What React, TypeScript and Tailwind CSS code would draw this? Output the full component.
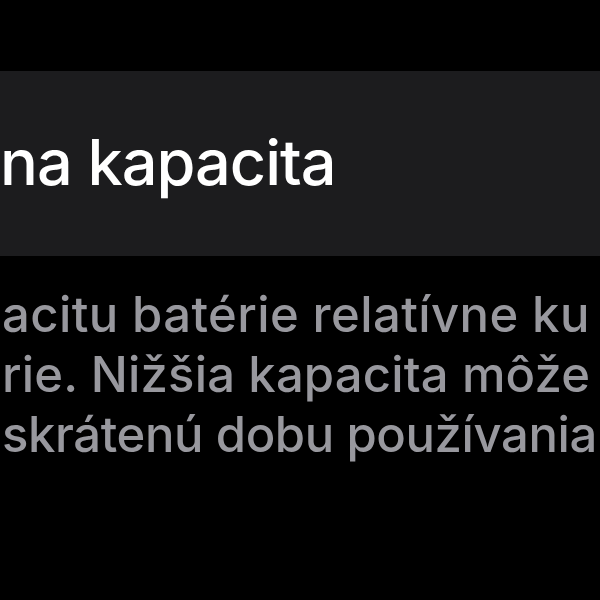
export default function App() {
  const font = { fontFamily: "Inter, 'Noto Sans', sans-serif" };
  return (
    <div className="w-[600px] h-[600px] bg-black overflow-hidden pt-[71px]" style={font}>
      <div className="h-[185px] bg-[#1c1c1e] pt-[60px]">
        <div className="whitespace-nowrap text-[63px] leading-[63px] font-medium text-white tracking-[-1px]">
          na kapacita
        </div>
      </div>
      <div className="pt-[29px] pl-[2px] flex flex-col text-[49px] leading-[60px] font-medium text-[#98989e] whitespace-nowrap">
        <div className="tracking-[0.4px]">acitu batérie relatívne ku</div>
        <div className="tracking-[0.15px]">rie. Nižšia kapacita môže</div>
        <div className="tracking-[-0.4px]">skrátenú dobu používania</div>
      </div>
    </div>
  );
}
